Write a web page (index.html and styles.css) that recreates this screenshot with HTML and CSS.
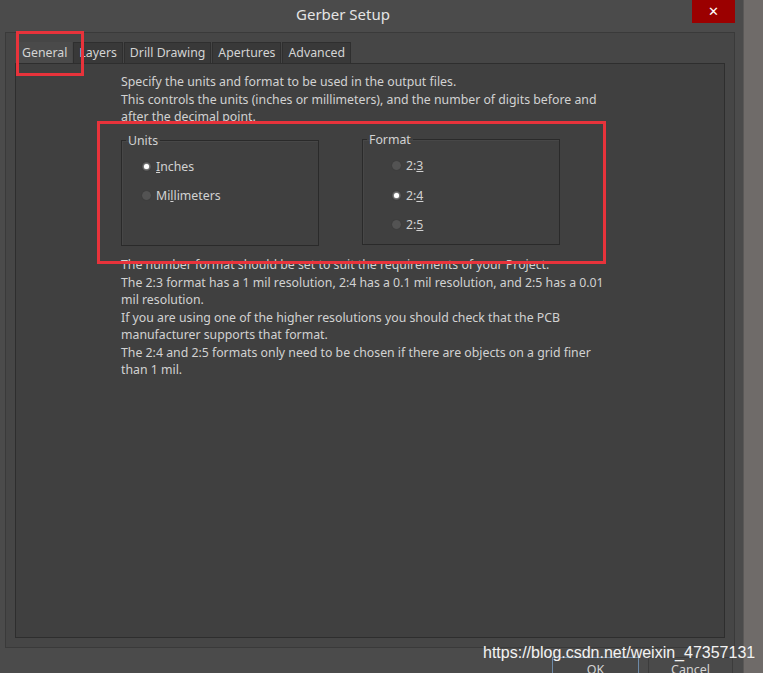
FILE: index.html
```html
<!DOCTYPE html>
<html lang="en">
<head>
    <meta charset="UTF-8">
    <meta name="viewport" content="width=device-width, initial-scale=1.0">
    <title>Gerber Setup</title>
    <link rel="stylesheet" href="styles.css">
</head>
<body>
    <div class="screen">
        <div class="dialog">
            <!-- title bar -->
            <div class="titlebar">
                <span class="title">Gerber Setup</span>
                <button class="close">&#10005;</button>
            </div>

            <!-- tab control -->
            <div class="tabs-frame">
                <div class="tab-strip">
                    <div class="tab active">General</div>
                    <div class="tab">Layers</div>
                    <div class="tab">Drill Drawing</div>
                    <div class="tab">Apertures</div>
                    <div class="tab">Advanced</div>
                </div>
                <div class="tab-page">
                    <p class="info">Specify the units and format to be used in the output files.<br>This controls the units (inches or millimeters), and the number of digits before and<br>after the decimal point.</p>

                    <div class="groups">
                        <fieldset class="group units">
                            <legend>Units</legend>
                            <label class="radio-row"><span class="radio checked"></span><span><u>I</u>nches</span></label>
                            <label class="radio-row"><span class="radio"></span><span>Mi<u>l</u>limeters</span></label>
                        </fieldset>
                        <fieldset class="group format">
                            <legend>Format</legend>
                            <label class="radio-row"><span class="radio"></span><span>2:<u>3</u></span></label>
                            <label class="radio-row"><span class="radio checked"></span><span>2:<u>4</u></span></label>
                            <label class="radio-row"><span class="radio"></span><span>2:<u>5</u></span></label>
                        </fieldset>
                    </div>

                    <p class="info notes">The number format should be set to suit the requirements of your Project.<br>The 2:3 format has a 1 mil resolution, 2:4 has a 0.1 mil resolution, and 2:5 has a 0.01<br>mil resolution.<br>If you are using one of the higher resolutions you should check that the PCB<br>manufacturer supports that format.<br>The 2:4 and 2:5 formats only need to be chosen if there are objects on a grid finer<br>than 1 mil.</p>
                </div>
            </div>

            <!-- OK / Cancel -->
            <div class="buttons">
                <button class="btn ok">OK</button>
                <button class="btn">Cancel</button>
            </div>
        </div>
        <div class="side"></div>

        <!-- red annotation boxes -->
        <div class="mark mark-tab"></div>
        <div class="mark mark-groups"></div>

        <div class="watermark">https://blog.csdn.net/weixin_47357131</div>
    </div>
</body>
</html>
```

FILE: styles.css
```css
body {
    margin: 0;
    background-color: #4c4c4c;
    font-family: "Noto Sans", "Open Sans", sans-serif;
    font-size: 12.3px;
    color: #d2d2d2;
}

.screen {
    position: relative;
    display: flex;
    width: 763px;
    height: 673px;
    overflow: hidden;
}

.dialog {
    width: 743px;
    flex-shrink: 0;
    background-color: #4b4b4b;
}

.side {
    flex: 1;
    background-color: #6f6b69;
    border-left: 1px solid #5a5857;
}

/* title bar */
.titlebar {
    display: flex;
    align-items: flex-start;
    height: 32px;
}

.title {
    flex: 1;
    padding-right: 6px;
    text-align: center;
    line-height: 29px;
    font-size: 15px;
    color: #e4e4e4;
}

.close {
    width: 43px;
    height: 23px;
    margin-right: 8px;
    padding: 0;
    border: none;
    background-color: #9b0000;
    color: #ffffff;
    font-family: "DejaVu Sans", sans-serif;
    font-size: 13px;
    font-weight: bold;
    line-height: 21px;
}

/* tabs */
.tabs-frame {
    box-sizing: border-box;
    height: 616px;
    margin: 0 8px 0 5px;
    padding: 9px;
    background-color: #464646;
    border: 1px solid #3a3a3a;
    display: flex;
    flex-direction: column;
}

.tab-strip {
    display: flex;
    gap: 1px;
    margin-left: 2px;
}

.tab {
    box-sizing: border-box;
    height: 21px;
    padding: 0 5px;
    line-height: 20px;
    font-size: 12.3px;
    color: #d4d4d4;
    background-color: #393939;
    border: 1px solid #2f2f2f;
    border-bottom: none;
}

.tab.active {
    padding: 0 4px;
    background-color: #4a4a4a;
    border-color: #4a4a4a;
}

.tab-page {
    flex: 1;
    background-color: #404040;
    border: 1px solid #2e2e2e;
    padding-left: 105px;
}

.info {
    margin: 9px 0 0 0;
    line-height: 17.5px;
    white-space: nowrap;
}

.notes {
    margin-top: 10px;
}

/* group boxes */
.groups {
    display: flex;
    align-items: flex-start;
    gap: 43px;
    margin-top: 6px;
}

.group {
    box-sizing: border-box;
    width: 198px;
    margin: 0;
    border: 1px solid #2a2a2a;
    box-shadow: inset 1px 1px 0 #474747;
}

.group legend {
    padding: 0 2px;
    margin-left: 4px;
    line-height: 17.5px;
}

.units {
    padding: 3px 0 35px 0;
}

.units .radio-row {
    padding-left: 20px;
}

.format {
    margin-top: -1px;
    padding: 3px 0 4px 0;
}

.format .radio-row {
    height: 29.5px;
    padding-left: 29px;
}

.radio-row {
    display: flex;
    align-items: center;
    gap: 5px;
    height: 29px;
}

.radio {
    position: relative;
    width: 9px;
    height: 9px;
    border-radius: 50%;
    background-color: #535353;
    box-shadow: 0 0 1px #2e2e2e;
}

.radio.checked::after {
    content: "";
    position: absolute;
    left: 2px;
    top: 2px;
    width: 5px;
    height: 5px;
    border-radius: 50%;
    background-color: #ffffff;
    box-shadow: 0 0 2px #ffffff;
}

/* bottom buttons */
.buttons {
    display: flex;
    justify-content: flex-end;
    gap: 9px;
    margin: 9px 10px 0 0;
}

.btn {
    width: 85px;
    height: 24px;
    padding: 0;
    font-family: inherit;
    font-size: 12.5px;
    color: #d4d4d4;
    background-color: #4a4a4a;
    border: 1px solid #3c3c3c;
}

.btn.ok {
    width: 87px;
    background-color: #474747;
    border-color: #6d8aa8;
}

/* annotation overlays */
.mark {
    position: absolute;
    box-sizing: border-box;
    border: 3px solid #e8333b;
}

.mark-tab {
    left: 16px;
    top: 31px;
    width: 68px;
    height: 45px;
}

.mark-groups {
    left: 97px;
    top: 121px;
    width: 509px;
    height: 143px;
}

.watermark {
    position: absolute;
    left: 483px;
    top: 644px;
    font-family: "Liberation Sans", Arial, sans-serif;
    font-size: 16px;
    color: #f2f2f2;
    text-shadow: 0 0 1px #5a5a5a;
}
```
